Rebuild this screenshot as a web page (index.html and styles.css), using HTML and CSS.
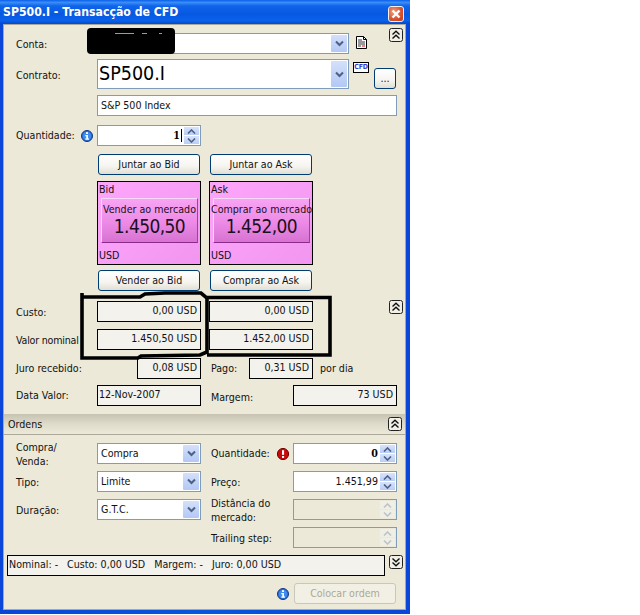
FILE: index.html
```html
<!DOCTYPE html>
<html lang="pt">
<head>
<meta charset="utf-8">
<title>SP500.I - Transacção de CFD</title>
<link rel="stylesheet" href="styles.css">
</head>
<body>
<svg class="defs" width="0" height="0">
  <defs>
    <symbol id="chev" viewBox="0 0 9 7"><path d="M1 1.500 4.500 5 8 1.500" fill="none" stroke="#4d6185" stroke-width="2"/></symbol>
    <symbol id="up" viewBox="0 0 9 5"><path d="M1 4.500 4.500 1 8 4.500" fill="none" stroke="#4d6185" stroke-width="1.600"/></symbol>
    <symbol id="down" viewBox="0 0 9 5"><path d="M1 .5 4.500 4 8 .5" fill="none" stroke="#4d6185" stroke-width="1.600"/></symbol>
    <symbol id="info" viewBox="0 0 12 12"><circle cx="6" cy="6" r="5.500" fill="#2f6fd8" stroke="#123a80"/><circle cx="6" cy="6" r="4" fill="#3f8cf0"/><rect x="5" y="2.200" width="2" height="1.800" fill="#fff"/><path d="M4.300 5h2.700v3.600h1v1.200H4.300V8.600h1V6.200h-1z" fill="#fff"/></symbol>
    <symbol id="warn" viewBox="0 0 12 12"><circle cx="6" cy="6" r="5.600" fill="#c80a0a" stroke="#700"/><rect x="5" y="2.200" width="2.100" height="4.600" fill="#fff"/><rect x="5" y="8" width="2.100" height="1.900" fill="#fff"/></symbol>
    <symbol id="dbl-up" viewBox="0 0 14 14"><rect x=".5" y=".5" width="13" height="13" rx="2" fill="#f2f0e6" stroke="#222"/><path d="M3.500 6.500 7 3.200l3.500 3.300M3.500 10.500 7 7.200l3.500 3.300" fill="none" stroke="#111" stroke-width="1.400"/></symbol>
    <symbol id="dbl-down" viewBox="0 0 14 14"><rect x=".5" y=".5" width="13" height="13" rx="2" fill="#f2f0e6" stroke="#222"/><path d="M3.500 3.500 7 6.800l3.500-3.300M3.500 7.500 7 10.800l3.500-3.300" fill="none" stroke="#111" stroke-width="1.400"/></symbol>
  </defs>
</svg>

<div class="window">
  <header class="titlebar">
    <span class="title">SP500.I - Transacção de CFD</span>
    <span class="close"><svg width="14" height="14" viewBox="0 0 14 14"><path d="M3.500 3.500l7 7M10.500 3.500l-7 7" stroke="#fff" stroke-width="2.400"/></svg></span>
  </header>

  <main class="client">
    <section class="trade">
      <svg class="collapse collapse-a"><use href="#dbl-up"/></svg>
      <div class="blot"></div>

      <div class="row row-conta">
        <label class="lbl nudge">Conta:</label>
        <div class="combo c252"><span class="val"></span><span class="drop"><svg width="9" height="7"><use href="#chev"/></svg></span></div>
        <svg class="doc" width="11" height="13" viewBox="0 0 11 13"><path d="M.5.5h7l3 3v9H.5z" fill="#fff" stroke="#000"/><path d="M7.500.5v3h3" fill="none" stroke="#000"/><path d="M2 4h4M2 6h7M2 8h7" stroke="#333"/><path d="M2 10h3" stroke="#333"/><path d="M6 10h3" stroke="#e00" stroke-width="1"/></svg>
      </div>

      <div class="row row-contrato">
        <label class="lbl nudge2">Contrato:</label>
        <div class="combo c252 tall"><span class="val big">SP500.I</span><span class="drop"><svg width="9" height="7"><use href="#chev"/></svg></span></div>
        <div class="contract-side">
          <span class="cfd">CFD</span>
          <button class="btn dots">...</button>
        </div>
      </div>

      <div class="row row-index">
        <span class="lbl"></span>
        <div class="field w300">S&amp;P 500 Index</div>
      </div>

      <div class="row row-qty">
        <label class="lbl lbl-icon">Quantidade:<svg class="ico" width="12" height="12"><use href="#info"/></svg></label>
        <div class="spin w104"><span class="num bold">1<i class="caret"></i></span><span class="spinner"><b><svg width="9" height="5"><use href="#up"/></svg></b><b><svg width="9" height="5"><use href="#down"/></svg></b></span></div>
      </div>

      <div class="row pair row-join">
        <span class="lbl"></span>
        <button class="btn wide">Juntar ao Bid</button>
        <button class="btn wide">Juntar ao Ask</button>
      </div>

      <div class="row pair-panels">
        <span class="lbl"></span>
        <div class="panel">
          <span>Bid</span>
          <div class="quote"><span class="q-l">Vender ao mercado</span><span class="q-p">1.450,50</span></div>
          <span class="ccy">USD</span>
        </div>
        <div class="panel">
          <span>Ask</span>
          <div class="quote"><span class="q-l">Comprar ao mercado</span><span class="q-p">1.452,00</span></div>
          <span class="ccy">USD</span>
        </div>
      </div>

      <div class="row pair row-deal">
        <span class="lbl"></span>
        <button class="btn wide">Vender ao Bid</button>
        <button class="btn wide">Comprar ao Ask</button>
      </div>

      <svg class="collapse collapse-b"><use href="#dbl-up"/></svg>

      <div class="row row-custo">
        <label class="lbl nudge">Custo:</label>
        <div class="ro w104">0,00 USD</div>
        <div class="ro w104">0,00 USD</div>
      </div>
      <div class="row row-nominal">
        <label class="lbl nudge tight">Valor nominal</label>
        <div class="ro w104">1.450,50 USD</div>
        <div class="ro w104">1.452,00 USD</div>
      </div>
      <div class="row row-juro">
        <label class="lbl lbl-juro">Juro recebido:</label>
        <div class="ro w64">0,08 USD</div>
        <label class="lbl-pago">Pago:</label>
        <div class="ro w64">0,31 USD</div>
        <span class="por">por dia</span>
      </div>
      <div class="row row-data">
        <label class="lbl">Data Valor:</label>
        <div class="ro w104 left">12-Nov-2007</div>
        <label class="lbl-marg">Margem:</label>
        <div class="ro w104">73 USD</div>
      </div>
    </section>

    <section class="orders">
      <div class="orders-head"><span>Ordens</span><svg class="collapse-i"><use href="#dbl-up"/></svg></div>
      <div class="order-grid">
        <label class="lbl two">Compra/<br>Venda:</label>
        <div class="combo w104"><span class="val">Compra</span><span class="drop"><svg width="9" height="7"><use href="#chev"/></svg></span></div>
        <label class="lbl2 lbl-icon">Quantidade:<svg class="ico" width="12" height="12"><use href="#warn"/></svg></label>
        <div class="spin w104"><span class="num bold">0</span><span class="spinner"><b><svg width="9" height="5"><use href="#up"/></svg></b><b><svg width="9" height="5"><use href="#down"/></svg></b></span></div>

        <label class="lbl nudge">Tipo:</label>
        <div class="combo w104"><span class="val">Limite</span><span class="drop"><svg width="9" height="7"><use href="#chev"/></svg></span></div>
        <label class="lbl2 nudge">Preço:</label>
        <div class="spin w104"><span class="num">1.451,99</span><span class="spinner"><b><svg width="9" height="5"><use href="#up"/></svg></b><b><svg width="9" height="5"><use href="#down"/></svg></b></span></div>

        <label class="lbl nudge">Duração:</label>
        <div class="combo w104"><span class="val">G.T.C.</span><span class="drop"><svg width="9" height="7"><use href="#chev"/></svg></span></div>
        <label class="lbl2 two">Distância do<br>mercado:</label>
        <div class="spin w104 off"><span class="num"></span><span class="spinner"><b><svg width="9" height="5"><use href="#up"/></svg></b><b><svg width="9" height="5"><use href="#down"/></svg></b></span></div>

        <span></span><span></span>
        <label class="lbl2 nudge">Trailing step:</label>
        <div class="spin w104 off"><span class="num"></span><span class="spinner"><b><svg width="9" height="5"><use href="#up"/></svg></b><b><svg width="9" height="5"><use href="#down"/></svg></b></span></div>
      </div>

      <div class="summary-row">
        <div class="summary"><span>Nominal: -</span><span>Custo: 0,00 USD</span><span>Margem: -</span><span>Juro: 0,00 USD</span></div>
        <svg class="collapse-i"><use href="#dbl-down"/></svg>
      </div>

      <div class="footer">
        <svg width="12" height="12"><use href="#info"/></svg>
        <button class="btn place" disabled>Colocar ordem</button>
      </div>
    </section>
  </main>

  <svg class="ink" width="410" height="615" viewBox="0 0 410 615">
    <path d="M82 293V358H138L141 356 200 355 207 352V298L201 293H165L145 294 140 297H82M207 297.500H330V355H207" fill="none" stroke="#000" stroke-width="3.600"/>
  </svg>
</div>
</body>
</html>
```
FILE: styles.css
```css
* { box-sizing: border-box; }
html, body { margin: 0; padding: 0; background: #fff; }
body { font: 10.6px/13px "DejaVu Sans Condensed", "DejaVu Sans", sans-serif; color: #111; width: 640px; height: 615px; overflow: hidden; }
.defs { position: absolute; }

.window {
  position: relative;
  width: 410px; height: 614px;
  padding: 0 4px 4px 3px;
  background: linear-gradient(90deg, #0a46d8 0, #0855dd 50%, #0a46d8 100%);
  display: flex; flex-direction: column;
}
.titlebar {
  height: 24px; margin: 0 -4px 0 -3px; padding: 3px 7px 0 3px; flex: none;
  display: flex; align-items: center; justify-content: space-between;
  background: linear-gradient(180deg, #0a5fe8 0, #3a8ef8 10%, #0f64ea 25%, #0758e0 60%, #0a62ec 85%, #0548c8 100%);
}
.title { color: #fff; font: bold 12.2px/18px "DejaVu Sans Condensed", sans-serif; margin-top: -3px; }
.close {
  width: 14px; height: 14px; border-radius: 2px;
  background: radial-gradient(circle at 35% 35%, #f0a080, #d8502c 60%, #c03c18);
  outline: 1px solid #f4f0f0; display: block;
}
.close svg { display: block; }

.client {
  flex: 1; position: relative;
  background: #ece9d8;
  border: 1px solid #aca899;
  display: flex; flex-direction: column;
}
.trade { position: relative; padding-left: 12px; height: 389px; flex: none; }

.row { display: flex; align-items: center; }
.lbl { width: 81px; flex: none; }
.nudge { padding-top: 2px; }
.nudge2 { padding-top: 3px; }
.tight { letter-spacing: -.2px; white-space: nowrap; }
.row-conta { height: 21px; margin-top: 8px; }
.row-contrato { height: 30px; margin-top: 5px; }
.row-index { height: 21px; margin-top: 6px; }
.row-qty { height: 21px; margin-top: 9px; }
.row-join { height: 21px; margin-top: 8px; }
.pair-panels { height: 84px; margin-top: 6px; }
.row-deal { height: 21px; margin-top: 5px; }
.row-custo { height: 21px; margin-top: 10px; }
.row-nominal { height: 21px; margin-top: 7px; }
.row-juro { height: 21px; margin-top: 8px; }
.row-data { height: 21px; margin-top: 6px; }

.pair .wide { margin-left: 1px; }
.pair .wide + .wide { margin-left: 10px; }
.pair-panels .panel + .panel,
.row-custo .ro + .ro,
.row-nominal .ro + .ro { margin-left: 8px; }

.combo, .spin, .field {
  height: 21px; background: #fff; border: 1px solid #7f9db9;
  display: flex; align-items: center; flex: none;
}
.c252 { width: 252px; }
.w104 { width: 104px; }
.w64 { width: 64px; flex: none; }
.w300 { width: 300px; padding-left: 3px; }
.tall { height: 30px; }
.val { flex: 1; padding-left: 3px; white-space: nowrap; }
.big { font: 19.5px/26px "DejaVu Sans Condensed", sans-serif; color: #000; padding-left: 1px; }
.drop {
  width: 16px; align-self: stretch; margin: 1px; flex: none;
  background: linear-gradient(180deg, #d4e0fb, #b2c8f5);
  display: flex; align-items: center; justify-content: center;
  border-radius: 1px;
}
.drop svg { display: block; }
.doc { margin-left: 7px; margin-top: -2px; }
.contract-side { display: flex; align-items: flex-start; margin-left: 4px; align-self: stretch; }
.cfd {
  width: 16px; height: 11px; margin-top: 3px; flex: none;
  border: 1px solid #000; background: #fff; color: #3a3ad0;
  font: bold 7px/9px "DejaVu Sans Condensed", sans-serif; text-align: center; letter-spacing: -.3px;
  overflow: hidden;
}
.btn {
  font: inherit; color: #111; padding: 0;
  height: 21px; border: 1px solid #003c74; border-radius: 3px;
  background: linear-gradient(180deg, #fff 0, #f5f4ef 60%, #e2ded3 100%);
}
.dots { width: 22px; margin: 9px 0 0 5px; flex: none; }
.wide { width: 102px; flex: none; }

.lbl-icon { display: flex; align-items: center; justify-content: space-between; }
.row .lbl-icon { padding-right: 4px; }
.ico { flex: none; display: block; }

.spin { justify-content: flex-end; }
.num { flex: 1; text-align: right; padding-right: 1px; white-space: nowrap; }
.bold { font-weight: bold; font-family: "DejaVu Serif Condensed", "DejaVu Serif", serif; color: #000; }
.caret { display: inline-block; width: 1px; height: 13px; background: #000; vertical-align: -3px; margin-left: 1px; }
.spinner { width: 15px; align-self: stretch; margin: 1px; display: flex; flex-direction: column; gap: 1px; flex: none; }
.spinner b { flex: 1; background: linear-gradient(180deg, #d8e3fb, #b8cdf6); display: flex; align-items: center; justify-content: center; }
.spinner svg { display: block; }
.off { background: #ece9d8; }
.off .spinner b { background: #f0efe6; }
.off .spinner svg { opacity: .3; }

.panel {
  width: 104px; height: 84px; flex: none;
  border: 1px solid #000;
  background: linear-gradient(135deg, #fca6fb, #f296f0);
  padding: 1px 1px 2px 1px;
  display: flex; flex-direction: column;
  color: #111;
}
.ccy { margin-top: auto; }
.quote {
  height: 45px; margin: 2px 1px 0 2px; flex: none;
  border: 1px solid;
  border-color: #f8d8f8 #a040a0 #8a2a8a #f8d8f8;
  background: linear-gradient(180deg, #f8a4f4, #ec8ae6 55%, #d872d2);
  display: flex; flex-direction: column; align-items: center;
  color: #1c1020; white-space: nowrap;
}
.q-l { line-height: 13px; margin-top: 4px; }
.q-p { font-size: 19px; line-height: 20px; letter-spacing: -.6px; }

.ro {
  height: 21px; background: #f3f2ec; border: 1px solid #000;
  text-align: right; padding: 2px 3px 0 0; flex: none; white-space: nowrap;
}
.ro.w104 { width: 104px; }
.left { text-align: left; padding-left: 1px; }
.lbl-juro { width: 121px; }
.lbl-pago { width: 38px; margin-left: 10px; }
.por { margin-left: 7px; }
.lbl-marg { width: 82px; margin-left: 10px; }
.row-data .lbl-marg { padding-top: 4px; }

.collapse { position: absolute; width: 14px; height: 14px; display: block; }
.collapse-a { left: 385px; top: 3px; }
.collapse-b { left: 385px; top: 275px; }
.collapse-i { width: 14px; height: 14px; display: block; flex: none; }

.blot {
  position: absolute; left: 83px; top: 3px; width: 88px; height: 26px;
  background-color: #000; border-radius: 4px; z-index: 2;
  background-image:
    linear-gradient(#8aa0b8, #8aa0b8),
    linear-gradient(#8aa0b8, #8aa0b8),
    linear-gradient(#8aa0b8, #8aa0b8);
  background-size: 19px 1px, 5px 1px, 3px 1px;
  background-position: 28px 5px, 55px 5px, 72px 5px;
  background-repeat: no-repeat;
}

.orders { flex: 1; display: flex; flex-direction: column; }
.orders-head {
  height: 21px; flex: none; padding: 0 3px 0 4px;
  display: flex; align-items: center; justify-content: space-between;
  background: linear-gradient(180deg, #c6c3b3 0, #dedbcb 50%, #ece9d8 100%);
  border-bottom: 1px solid #aca899;
}
.order-grid {
  margin-top: 8px; padding-left: 12px;
  display: grid;
  grid-template-columns: 81px 104px 92px 104px;
  grid-auto-rows: 21px; row-gap: 7px; column-gap: 0;
  align-items: center;
}
.order-grid > .lbl2 { margin-left: 10px; width: 78px; white-space: nowrap; }
.order-grid > .spin, .order-grid > .combo { width: 104px; }
.two { line-height: 14px; }

.summary-row { margin: 7px 0 0 3px; display: flex; align-items: flex-start; gap: 4px; }
.summary {
  width: 378px; height: 21px; border: 1px solid #000; background: #f3f2ec;
  display: flex; gap: 9px; padding: 2px 0 0 1px; white-space: nowrap;
}
.footer { margin-top: 7px; padding-right: 9px; display: flex; align-items: center; justify-content: flex-end; gap: 5px; }
.footer svg { display: block; }
.place {
  width: 102px; color: #aca899; border-color: #c9c7ba;
  background: #f2f0e4;
}
.ink { position: absolute; left: 0; top: 0; pointer-events: none; }
```
